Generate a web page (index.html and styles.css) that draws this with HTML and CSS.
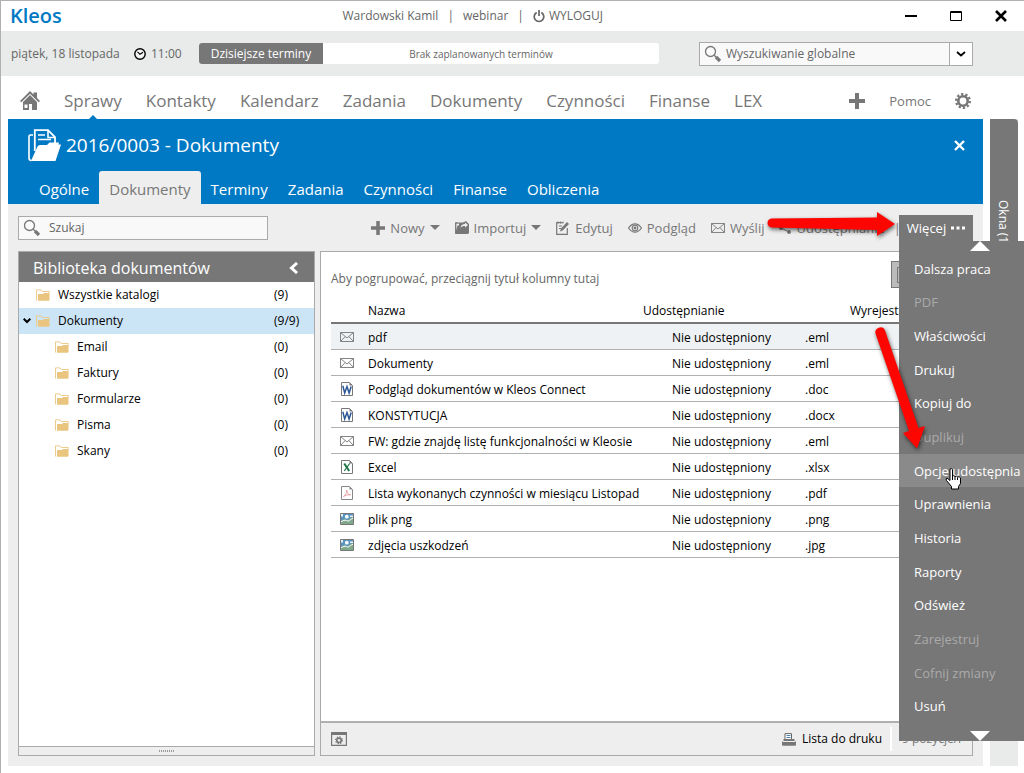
FILE: index.html
```html
<!DOCTYPE html>
<html lang="pl">
<head>
    <meta charset="UTF-8">
    <meta name="viewport" content="width=device-width, initial-scale=1.0">
    <title>Kleos - Dokumenty</title>
    <link rel="stylesheet" href="styles.css">
</head>
<body>
    <!-- shared icons -->
    <svg class="sprite" aria-hidden="true">
        <symbol id="i-search" viewBox="0 0 18 18">
            <circle cx="6.5" cy="6.5" r="5" fill="#fbfbfb" stroke="#777" stroke-width="1.3"/>
            <path d="M10.2 10.2l2 2" stroke="#777" stroke-width="1.3"/>
            <path d="M12 12l4 4" stroke="#777" stroke-width="3.2"/>
        </symbol>
        <symbol id="i-plus" viewBox="0 0 16 16"><path d="M6 0h4v6h6v4h-6v6H6v-6H0V6h6z" fill="#777"/></symbol>
        <symbol id="i-folder" viewBox="0 0 14 12">
            <path d="M.5 11.5V.9h4.600l1.200 1.600h7v1.600" fill="none" stroke="#eccb8c"/>
            <path d="M2 5h5l1-1h5.500v6.800q0 1-1 1H2z" fill="#e9c57f"/>
        </symbol>
        <symbol id="i-mail" viewBox="0 0 14 10">
            <path d="M.5.5h13v9H.5zM.5.5L7 6l6.500-5.500M.5 9.500l4.700-5M13.500 9.500l-4.700-5" fill="none" stroke="#777" stroke-width=".9"/>
        </symbol>
        <symbol id="i-word" viewBox="0 0 12 14">
            <path d="M.5.5h8l3 3v10H.5z" fill="#fff" stroke="#777"/>
            <path d="M8.500.5v3h3z" fill="#777"/>
            <path d="M1.800 3.800l1.900 7.200L6 4.600l2.100 6.400L10.200 4.600" fill="none" stroke="#2b5797" stroke-width="1.500"/>
        </symbol>
        <symbol id="i-excel" viewBox="0 0 12 14">
            <path d="M.5.5h8l3 3v10H.5z" fill="#fff" stroke="#777"/>
            <path d="M8.500.5v3h3z" fill="#777"/>
            <path d="M3.200 3.500l5 7.500" stroke="#1e7145" stroke-width="2"/>
            <path d="M8.600 3.500l-5.300 7.500" stroke="#1e7145" stroke-width="1.200"/>
        </symbol>
        <symbol id="i-pdf" viewBox="0 0 12 14">
            <path d="M.5.5h8l3 3v10H.5z" fill="#fff" stroke="#888"/>
            <path d="M8.500.5v3h3z" fill="#888"/>
            <path d="M2.500 10.500c2.500-1.500 3.500-4.500 3.200-6.500.2 3 1.500 4.800 4 4.800-2.600-.3-5 .4-7.200 1.700z" fill="none" stroke="#e58a8a" stroke-width=".7"/>
        </symbol>
        <symbol id="i-image" viewBox="0 0 14 12">
            <path d="M.5.5h13v11H.5z" fill="#5b93c0" stroke="#777"/>
            <path d="M1 11V8l3.500-2.500L7 8l3-3 3-1v7z" fill="#7fa88d"/>
            <path d="M1 8.800c3-2 5-2 7-.6 2-.8 3.500-2.700 5-3" fill="none" stroke="#fff" stroke-width="1"/>
            <circle cx="6.800" cy="3.700" r="1.900" fill="#fff"/>
            <path d="M1 1h2v2.500H1zM10 2.500h3v1.400h-3z" fill="#e6f1f8"/>
        </symbol>
    </svg>

    <header class="title-bar">
        <span class="logo">Kleos</span>
        <div class="account">
            <span>Wardowski Kamil</span>
            <span>|</span>
            <span>webinar</span>
            <span>|</span>
            <button type="button" class="logout">
                <svg width="12" height="13" viewBox="0 0 12 13"><path d="M3.700 2.500a4.800 4.800 0 1 0 4.600 0M6 0v6" fill="none" stroke="#666" stroke-width="1.700"/></svg>
                WYLOGUJ
            </button>
        </div>
        <div class="window-buttons">
            <button type="button" aria-label="Minimalizuj"><svg width="12" height="12" viewBox="0 0 12 12"><path d="M0 6h12" stroke="#000" stroke-width="2"/></svg></button>
            <button type="button" aria-label="Maksymalizuj"><svg width="12" height="12" viewBox="0 0 12 12"><path d="M.5 1.500h11v9H.5zM0 2.500h12" fill="none" stroke="#000"/></svg></button>
            <button type="button" aria-label="Zamknij"><svg width="12" height="12" viewBox="0 0 12 12"><path d="M1 1l10 10M11 1L1 11" stroke="#000" stroke-width="2.600"/></svg></button>
        </div>
    </header>

    <div class="info-bar">
        <span class="date">piątek, 18 listopada</span>
        <svg width="12" height="12" viewBox="0 0 12 12"><circle cx="6" cy="6" r="5.200" fill="#f5f5f5" stroke="#000" stroke-width="1.400"/><path d="M3.500 3.800L6 6.300l3-2" fill="none" stroke="#000" stroke-width="1.200"/></svg>
        <span class="time">11:00</span>
        <div class="today">
            <button type="button" class="today-label">Dzisiejsze terminy</button>
            <span class="today-text">Brak zaplanowanych terminów</span>
        </div>
        <div class="search global-search">
            <svg width="18" height="18"><use href="#i-search"/></svg>
            <input type="text" placeholder="Wyszukiwanie globalne" aria-label="Wyszukiwanie globalne">
            <button type="button" aria-label="Zakres wyszukiwania"><svg width="10" height="6" viewBox="0 0 10 6"><path d="M1 1l4 3.500L9 1" fill="none" stroke="#000" stroke-width="1.700"/></svg></button>
        </div>
    </div>

    <nav class="main-nav">
        <a href="#" class="home" aria-label="Start"><svg width="20" height="19" viewBox="0 0 20 19"><path d="M0 10L10 0l3.500 3.500V1.500H17V7l3 3-1.300 1.300L10 2.800l-8.700 8.500z" fill="#777"/><path d="M3 11l7-7 7 7v8h-5v-6H9v6H3z" fill="#777"/><path d="M4.500 13.500h3V17h-3z" fill="#fff"/></svg></a>
        <a href="#" class="current">Sprawy</a>
        <a href="#">Kontakty</a>
        <a href="#">Kalendarz</a>
        <a href="#">Zadania</a>
        <a href="#">Dokumenty</a>
        <a href="#">Czynności</a>
        <a href="#">Finanse</a>
        <a href="#">LEX</a>
        <div class="nav-tools">
            <button type="button" aria-label="Dodaj"><svg width="16" height="16"><use href="#i-plus"/></svg></button>
            <a href="#">Pomoc</a>
            <button type="button" aria-label="Ustawienia"><svg width="16" height="16" viewBox="0 0 16 16"><circle cx="8" cy="8" r="4.700" fill="none" stroke="#777" stroke-width="2.600"/><circle cx="8" cy="8" r="6.800" fill="none" stroke="#777" stroke-width="2.400" stroke-dasharray="2.270 2"/></svg></button>
        </div>
    </nav>

    <div class="workspace">
        <main class="case">
            <div class="case-header">
                <div class="case-title">
                    <svg width="33" height="33" viewBox="0 0 33 33">
                        <path d="M5 6H2.500Q1 6 1 8v21q0 2.500 2.500 2.500" fill="none" stroke="#fff" stroke-width="1.600"/>
                        <path d="M6.800 22V1.200H20l7 7V14" fill="none" stroke="#fff" stroke-width="1.800"/>
                        <path d="M20 1v7.500h7" fill="none" stroke="#fff" stroke-width="1.600"/>
                        <path d="M10 6h7M10 10.500h13" stroke="#fff" stroke-width="1.600"/>
                        <path d="M3 32l6.500-14.500q.8-1.500 2.500-1.500h7l2.500-2.500H31l-.5 2h2.500L27.500 32z" fill="#fff"/>
                    </svg>
                    <h1>2016/0003 - Dokumenty</h1>
                    <button type="button" class="case-close" aria-label="Zamknij sprawę"><svg width="11" height="11" viewBox="0 0 11 11"><path d="M1 1l9 9M10 1l-9 9" stroke="#fff" stroke-width="2.400"/></svg></button>
                </div>
                <nav class="tabs">
                    <a href="#">Ogólne</a>
                    <a href="#" class="active">Dokumenty</a>
                    <a href="#">Terminy</a>
                    <a href="#">Zadania</a>
                    <a href="#">Czynności</a>
                    <a href="#">Finanse</a>
                    <a href="#">Obliczenia</a>
                </nav>
            </div>

            <div class="toolbar">
                <div class="search local-search">
                    <svg width="18" height="18"><use href="#i-search"/></svg>
                    <input type="text" placeholder="Szukaj" aria-label="Szukaj">
                </div>
                <div class="actions">
                    <button type="button"><svg width="14" height="14"><use href="#i-plus"/></svg>Nowy<i class="caret"></i></button>
                    <button type="button"><svg width="14" height="14" viewBox="0 0 14 14"><path d="M.7 12V2h3" fill="none" stroke="#777" stroke-width="1.300"/><path d="M0 13l2.500-8.500H4V1.500h4L11 0l3 3v9l-1 1z" fill="#777"/><path d="M5.500 7c.5-3 2-4 4.500-4V1.500L13 4l-3 2.500V5c-2 0-3.500.4-4.500 2z" fill="#eee"/></svg>Importuj<i class="caret"></i></button>
                    <button type="button"><svg width="14" height="14" viewBox="0 0 14 14"><path d="M11.300 7v6.300H.7V1.700h6" fill="none" stroke="#777" stroke-width="1.200"/><path d="M2 .5v2M4.500.5v2M7 .5v2M3 5h3M3 7.500h2" stroke="#777"/><path d="M4 10.500l1-3L11 1l2 2-6.300 6.500z" fill="#777"/></svg>Edytuj</button>
                    <button type="button"><svg width="14" height="10" viewBox="0 0 14 10"><path d="M.5 5Q3.500.8 7 .8T13.500 5Q10.500 9.200 7 9.200T.5 5z" fill="none" stroke="#777" stroke-width="1.200"/><circle cx="7" cy="5" r="2.800" fill="none" stroke="#777" stroke-width="1.100"/><circle cx="7" cy="5" r="1.400" fill="#777"/></svg>Podgląd</button>
                    <button type="button"><svg width="14" height="10"><use href="#i-mail"/></svg>Wyślij</button>
                    <button type="button" class="share"><svg width="12" height="12" viewBox="0 0 12 12"><path d="M10 2L2 6l8 4" fill="none" stroke="#777"/><circle cx="10" cy="2" r="2" fill="#777"/><circle cx="2" cy="6" r="2" fill="#777"/><circle cx="10" cy="10" r="2" fill="#777"/></svg>Udostępnianie</button>
                    <span class="divider">|</span>
                </div>
                <div class="more">
                    <button type="button" class="more-button">Więcej
                        <svg width="14" height="4" viewBox="0 0 14 4"><path d="M0 .5h3v3H0zM5.500.5h3v3h-3zM11 .5h3v3h-3z" fill="#fff"/></svg>
                    </button>
                    <div class="more-menu">
                        <i class="scroll-up"></i>
                        <button type="button">Dalsza praca</button>
                        <button type="button" disabled>PDF</button>
                        <button type="button">Właściwości</button>
                        <button type="button">Drukuj</button>
                        <button type="button">Kopiuj do</button>
                        <button type="button" disabled>Duplikuj</button>
                        <button type="button" class="hover">Opcje udostępnia</button>
                        <button type="button">Uprawnienia</button>
                        <button type="button">Historia</button>
                        <button type="button">Raporty</button>
                        <button type="button">Odśwież</button>
                        <button type="button" disabled>Zarejestruj</button>
                        <button type="button" disabled>Cofnij zmiany</button>
                        <button type="button">Usuń</button>
                        <i class="scroll-down"></i>
                    </div>
                </div>
            </div>

            <div class="columns">
                <aside class="library">
                    <div class="library-header">
                        <h2>Biblioteka dokumentów</h2>
                        <button type="button" aria-label="Zwiń"><svg width="9" height="12" viewBox="0 0 9 12"><path d="M8 1L2.500 6 8 11" fill="none" stroke="#fff" stroke-width="3"/></svg></button>
                    </div>
                    <ul class="tree">
                        <li><svg width="14" height="12"><use href="#i-folder"/></svg><a href="#">Wszystkie katalogi</a><span>(9)</span></li>
                        <li class="selected"><svg class="expander" width="8" height="6" viewBox="0 0 8 6"><path d="M.7.7L4 4 7.300.7" fill="none" stroke="#000" stroke-width="2"/></svg><svg width="14" height="12"><use href="#i-folder"/></svg><a href="#">Dokumenty</a><span>(9/9)</span></li>
                        <li class="child"><svg width="14" height="12"><use href="#i-folder"/></svg><a href="#">Email</a><span>(0)</span></li>
                        <li class="child"><svg width="14" height="12"><use href="#i-folder"/></svg><a href="#">Faktury</a><span>(0)</span></li>
                        <li class="child"><svg width="14" height="12"><use href="#i-folder"/></svg><a href="#">Formularze</a><span>(0)</span></li>
                        <li class="child"><svg width="14" height="12"><use href="#i-folder"/></svg><a href="#">Pisma</a><span>(0)</span></li>
                        <li class="child"><svg width="14" height="12"><use href="#i-folder"/></svg><a href="#">Skany</a><span>(0)</span></li>
                    </ul>
                    <div class="splitter"><i></i></div>
                </aside>

                <section class="documents">
                    <div class="grid-area">
                        <div class="group-row">
                            <span>Aby pogrupować, przeciągnij tytuł kolumny tutaj</span>
                            <button type="button" class="view-toggle" aria-label="Widok"><i></i></button>
                        </div>
                        <table>
                            <thead>
                                <tr><th class="c-icon"></th><th>Nazwa</th><th class="c-shared">Udostępnianie</th><th class="c-ext"></th><th class="c-out">Wyrejestr</th></tr>
                            </thead>
                            <tbody>
                                <tr class="focused"><td><svg width="14" height="10"><use href="#i-mail"/></svg></td><td>pdf</td><td>Nie udostępniony</td><td>.eml</td><td></td></tr>
                                <tr><td><svg width="14" height="10"><use href="#i-mail"/></svg></td><td>Dokumenty</td><td>Nie udostępniony</td><td>.eml</td><td></td></tr>
                                <tr><td><svg width="12" height="14"><use href="#i-word"/></svg></td><td>Podgląd dokumentów w Kleos Connect</td><td>Nie udostępniony</td><td>.doc</td><td></td></tr>
                                <tr><td><svg width="12" height="14"><use href="#i-word"/></svg></td><td>KONSTYTUCJA</td><td>Nie udostępniony</td><td>.docx</td><td></td></tr>
                                <tr><td><svg width="14" height="10"><use href="#i-mail"/></svg></td><td>FW: gdzie znajdę listę funkcjonalności w Kleosie</td><td>Nie udostępniony</td><td>.eml</td><td></td></tr>
                                <tr><td><svg width="12" height="14"><use href="#i-excel"/></svg></td><td>Excel</td><td>Nie udostępniony</td><td>.xlsx</td><td></td></tr>
                                <tr><td><svg width="12" height="14"><use href="#i-pdf"/></svg></td><td>Lista wykonanych czynności w miesiącu Listopad</td><td>Nie udostępniony</td><td>.pdf</td><td></td></tr>
                                <tr><td><svg width="14" height="12"><use href="#i-image"/></svg></td><td>plik png</td><td>Nie udostępniony</td><td>.png</td><td></td></tr>
                                <tr><td><svg width="14" height="12"><use href="#i-image"/></svg></td><td>zdjęcia uszkodzeń</td><td>Nie udostępniony</td><td>.jpg</td><td></td></tr>
                            </tbody>
                        </table>
                    </div>
                    <div class="grid-footer">
                        <button type="button" aria-label="Ustawienia listy"><svg width="16" height="14" viewBox="0 0 16 14"><path d="M.6.600h14.800v12.800H.6z" fill="none" stroke="#777" stroke-width="1.200"/><path d="M0 0h16v3H0z" fill="#777"/><circle cx="8" cy="8.300" r="2.200" fill="none" stroke="#777" stroke-width="1.600"/><circle cx="8" cy="8.300" r="3.400" fill="none" stroke="#777" stroke-width="1.200" stroke-dasharray="1.340 1.330"/></svg></button>
                        <button type="button" class="print"><svg width="14" height="13" viewBox="0 0 14 13"><path d="M3 7V.6h6.500V7" fill="#fff" stroke="#666"/><path d="M4.500 2.500h4M4.500 4.500h4" stroke="#4f86b8"/><path d="M1.500 6h11v2H1.500zM0 8.500h14v3.300q0 1-1 1H1q-1 0-1-1z" fill="#777"/><path d="M1 8.500h12" stroke="#eee"/></svg>Lista do druku</button>
                        <span class="count">9 pozycje/i</span>
                    </div>
                </section>
            </div>
        </main>
        <aside class="windows-rail">
            <button type="button">Okna (1)</button>
        </aside>
    </div>

    <!-- tutorial arrows and mouse pointer over the window -->
    <svg class="arrow arrow-right" width="140" height="36" viewBox="0 0 140 36"><path d="M8 11.500l105-1V5l18 12-18 12v-6L8 20.500a4.500 4.500 0 0 1 0-9z" fill="#fd0500"/></svg>
    <svg class="arrow arrow-down" width="64" height="134" viewBox="0 0 64 134"><path d="M7.500 9.500a5 5 0 0 1 9.500-3L50.500 104l6.500-2-8 22.500L35 109l6-2z" fill="#fd0500"/></svg>
    <svg class="pointer" width="17" height="22" viewBox="0 0 17 22"><path d="M5 1q1.500-1 2.500.5V8q1.200-1 2.500.5 1.500-1 2.500.5 1.800-.8 3 .8v5.700l-2 3V21H6.500v-2.500l-5-6Q.5 10.500 2 10l3 2.500z" fill="#fff" stroke="#000"/><path d="M7.500 8v4M10 8.500V12M12.500 9.500V12" stroke="#000"/></svg>
</body>
</html>
```
FILE: styles.css
```css
* {
    box-sizing: border-box;
}
body {
    margin: 0;
    min-height: 100vh;
    display: flex;
    flex-direction: column;
    position: relative;
    overflow: hidden;
    border-top: 1px solid #b0b0b0;
    border-left: 1px solid #b0b0b0;
    background-color: #fff;
    color: #000;
    font-family: "Open Sans", "Noto Sans", sans-serif;
    font-size: 12px;
    line-height: 16px;
}
a {
    color: inherit;
    text-decoration: none;
}
button {
    display: flex;
    align-items: center;
    padding: 0;
    border: none;
    background: none;
    color: inherit;
    font: inherit;
    white-space: nowrap;
}
svg {
    display: block;
    flex: none;
}
h1, h2 {
    margin: 0;
    font-weight: normal;
}
.sprite {
    position: absolute;
    width: 0;
    height: 0;
}

/* window title */
.title-bar {
    height: 30px;
    display: grid;
    grid-template-columns: 1fr auto 404px;
    align-items: center;
    padding: 0 17px 0 9px;
}
.logo {
    color: #0079c4;
    font-size: 20px;
    font-weight: 600;
}
.account {
    display: flex;
    gap: 9px;
    color: #666;
}
.logout {
    gap: 4px;
}
.window-buttons {
    display: flex;
    justify-content: flex-end;
    gap: 33px;
}

.info-bar {
    height: 45px;
    display: flex;
    align-items: center;
    padding: 0 51px 0 10px;
    background-color: #e8ebea;
    color: #666;
}
.date {
    width: 123px;
    white-space: nowrap;
}
.time {
    width: 48px;
    margin-left: 5px;
}
.today {
    flex: 1;
    max-width: 460px;
    height: 21px;
    display: flex;
    border-radius: 3px;
    overflow: hidden;
    background-color: #fff;
}
.today-label {
    width: 124px;
    justify-content: center;
    background-color: #777;
    color: #fff;
}
.today-text {
    flex: 1;
    padding-right: 20px;
    font-size: 10px;
    line-height: 22px;
    text-align: center;
}
.search {
    height: 24px;
    display: flex;
    align-items: center;
    padding-left: 4px;
    border: 1px solid #aaa;
    background-color: #f9f9f9;
}
.search input {
    flex: 1;
    min-width: 0;
    padding: 1px 4px;
    border: none;
    outline: none;
    background: none;
    font: inherit;
    color: #666;
}
.search input::placeholder {
    color: #666;
    opacity: 1;
}
.global-search {
    width: 274px;
    margin-left: auto;
}
.global-search button {
    align-self: stretch;
    width: 23px;
    justify-content: center;
    border-left: 1px solid #aaa;
    background-color: #fff;
}

.main-nav {
    height: 43px;
    display: flex;
    align-items: center;
    gap: 24px;
    padding: 6px 53px 0 19px;
    color: #777;
    font-size: 17px;
    line-height: 24px;
}
.current {
    position: relative;
}
.current::after {
    content: "";
    position: absolute;
    left: 50%;
    bottom: -7px;
    margin-left: -5px;
    border: 5px solid transparent;
    border-top: none;
    border-bottom-color: #0079c4;
}
.nav-tools {
    display: flex;
    align-items: center;
    gap: 24px;
    margin-left: auto;
    font-size: 13px;
}

.workspace {
    flex: 1;
    display: flex;
    gap: 7px;
    padding: 0 6px 7px 7px;
}
.case {
    flex: 1;
    min-width: 0;
    display: flex;
    flex-direction: column;
    background-color: #eee;
}
.case-header {
    background-color: #0079c4;
    color: #fff;
}
.case-title {
    display: flex;
    align-items: center;
    gap: 5px;
    height: 52px;
    padding: 0 18px 0 20px;
}
.case-title h1 {
    font-size: 19px;
    line-height: 26px;
}
.case-close {
    margin-left: auto;
}
.tabs {
    display: flex;
    padding-left: 21px;
    font-size: 15px;
}
.tabs a {
    height: 33px;
    padding: 0 10px;
    line-height: 36px;
}
.tabs .active {
    border-radius: 3px 3px 0 0;
    background-color: #eee;
    color: #777;
}

.toolbar {
    height: 47px;
    display: flex;
    align-items: center;
    padding: 0 10px;
}
.local-search {
    width: 250px;
}
.local-search input {
    padding-left: 8px;
}
.actions {
    display: flex;
    align-items: center;
    gap: 15px;
    margin-left: auto;
    margin-right: -2px;
    color: #777;
    font-size: 13px;
}
.actions button {
    gap: 5px;
}
.divider {
    margin-left: -6px;
}
.caret {
    border: 5px solid transparent;
    border-top-color: #777;
    border-bottom: none;
}
.more {
    position: relative;
    align-self: flex-end;
    width: 74px;
    color: #fff;
    font-size: 13px;
}
.more-button {
    width: 100%;
    height: 26px;
    margin-bottom: 10px;
    justify-content: center;
    gap: 5px;
    background-color: #777;
}
.more-menu {
    position: absolute;
    z-index: 2;
    top: 26px;
    left: 0;
    right: -51px;
    height: 500px;
    display: flex;
    flex-direction: column;
    padding: 11px 0 18px;
    background-color: #777;
}
.more-menu button {
    flex: 1;
    padding-left: 15px;
}
.more-menu button:disabled {
    color: #aaa;
}
.more-menu .hover {
    background-color: #8a8a8a;
}
.scroll-up, .scroll-down {
    position: absolute;
    left: 71px;
    border: 10px solid transparent;
}
.scroll-up {
    top: 0;
    border-top: none;
    border-bottom-color: #fff;
}
.scroll-down {
    bottom: 0;
    border-bottom: none;
    border-top-color: #fff;
}

.columns {
    flex: 1;
    display: flex;
    gap: 5px;
    padding: 0 10px 10px;
}
.library {
    width: 297px;
    display: flex;
    flex-direction: column;
    border: 1px solid #aaa;
    background-color: #fff;
}
.library-header {
    height: 30px;
    display: flex;
    align-items: center;
    justify-content: space-between;
    padding: 1px 16px 0 14px;
    background-color: #777;
    color: #fff;
}
.library h2 {
    font-size: 16px;
    line-height: 24px;
}
.tree {
    flex: 1;
    margin: 0;
    padding: 0;
    list-style: none;
}
.tree li {
    position: relative;
    height: 26px;
    display: flex;
    align-items: center;
    gap: 8px;
    padding-left: 17px;
}
.tree .child {
    padding-left: 36px;
}
.tree .selected {
    background-color: #cce5f6;
}
.tree span {
    width: 40px;
    margin-left: auto;
}
.expander {
    position: absolute;
    left: 4px;
}
.splitter {
    height: 9px;
    display: flex;
    justify-content: center;
    align-items: center;
    border-top: 1px solid #aaa;
    background-color: #eee;
}
.splitter i {
    width: 16px;
    height: 2px;
    background: repeating-linear-gradient(to right, #999 0 1px, transparent 1px 2px);
}

.documents {
    flex: 1;
    min-width: 0;
    display: flex;
    flex-direction: column;
    border: 1px solid #aaa;
}
.grid-area {
    flex: 1;
    padding: 11px 9px 0 10px;
    background-color: #fff;
}
.group-row {
    display: flex;
    align-items: center;
    justify-content: space-between;
    height: 31px;
    color: #666;
}
.view-toggle {
    width: 72px;
    height: 27px;
    margin-bottom: 8px;
    padding: 0 5px;
    border: 1px solid #777;
    background-color: #bbb;
}
.view-toggle i {
    width: 14px;
    height: 16px;
    border: 1px solid #777;
}
table {
    width: 100%;
    table-layout: fixed;
    border-collapse: separate;
    border-spacing: 0;
    white-space: nowrap;
}
th, td {
    height: 26px;
    padding: 3px 0 0;
    text-align: left;
    font-weight: normal;
    border-bottom: 1px solid #b0b0b0;
}
th {
    height: 30px;
    padding: 6px 0 0;
    border-bottom: 2px solid #777;
}
.c-icon {
    width: 37px;
}
.c-shared {
    width: 162px;
}
.c-ext {
    width: 45px;
}
.c-out {
    width: 113px;
}
td:first-child svg {
    margin: 0 auto;
}
td:first-child {
    padding: 0 5px 0 0;
}
td:nth-child(3) {
    padding-left: 29px;
}
.focused {
    background-color: #eff2f4;
}
.grid-footer {
    height: 34px;
    display: flex;
    align-items: center;
    padding: 0 11px 0 10px;
    border-top: 2px solid #b0b0b0;
}
.print {
    gap: 6px;
    margin-left: auto;
    margin-right: 8px;
}
.count {
    width: 71px;
    padding-left: 10px;
    border-left: 2px solid #fff;
    color: #777;
    line-height: 24px;
    white-space: nowrap;
}

.windows-rail {
    width: 28px;
    background-color: #e8ebea;
}
.windows-rail button {
    width: 28px;
    height: 208px;
    justify-content: center;
    padding-right: 2px;
    border-radius: 0 4px 0 0;
    background-color: #777;
    color: #fff;
    writing-mode: vertical-rl;
}

.arrow {
    position: absolute;
    z-index: 3;
    filter: drop-shadow(1px 2px 2px rgba(0, 0, 0, 0.6));
}
.arrow-right {
    top: 206px;
    left: 763px;
}
.arrow-down {
    top: 323px;
    left: 867px;
}
.pointer {
    position: absolute;
    z-index: 3;
    top: 467px;
    left: 944px;
}
```
